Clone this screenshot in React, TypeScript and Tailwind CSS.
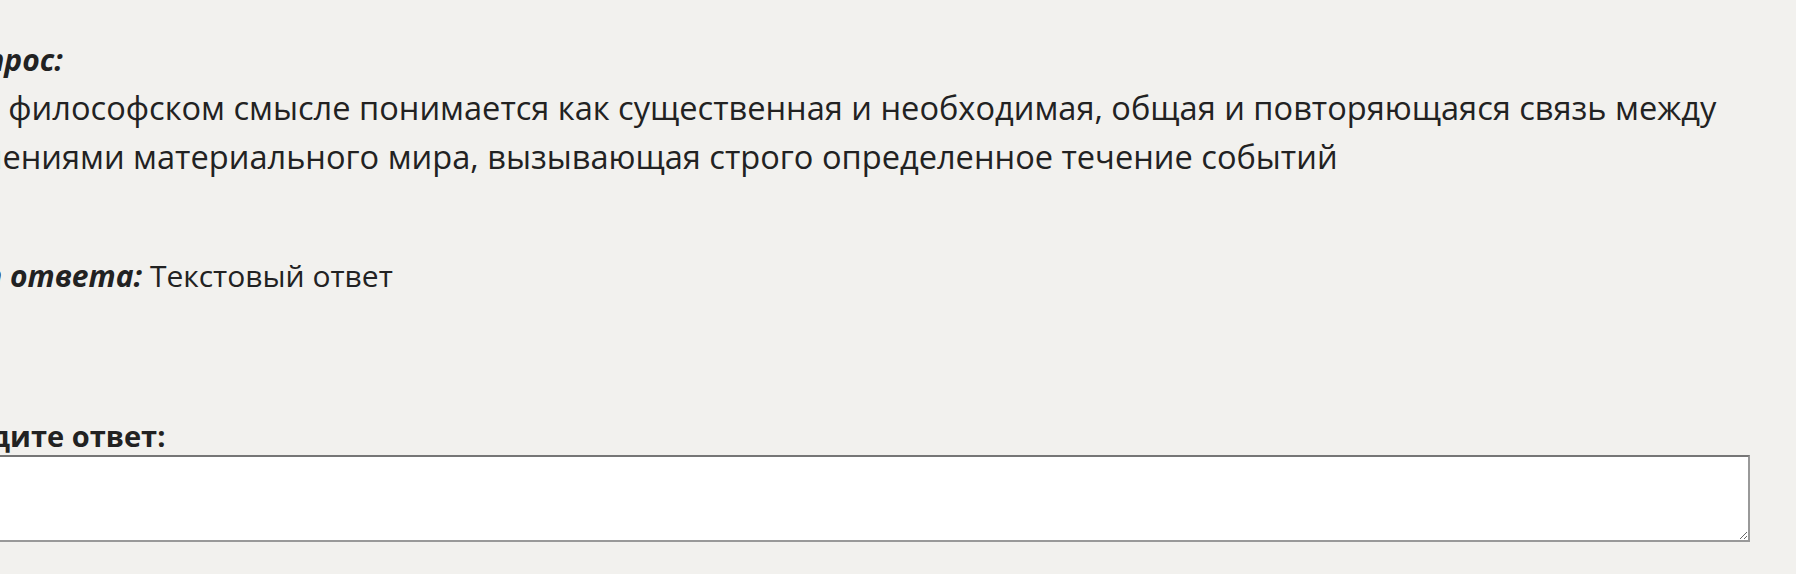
import React from "react";

export default function App() {
  return (
    <div className="min-h-screen w-full overflow-hidden bg-[#f2f1ee] text-[#222222]" style={{ fontFamily: '"Open Sans", "Noto Sans", sans-serif' }}>
      <div className="-ml-[50px] w-[1800px] pt-[35px] text-[30px]">
        <p className="font-bold italic leading-[49px]">Вопрос:</p>
        <p className="-ml-[3px] mt-[-1px] text-[32.6px] leading-[49px]">
          ... в философском смысле понимается как существенная и необходимая, общая и повторяющаяся связь между явлениями материального мира, вызывающая строго определенное течение событий
        </p>
        <p className="mt-[70px] leading-[49px]">
          <span className="font-bold italic">Тип ответа:</span> Текстовый ответ
        </p>
        <label className="-ml-[14px] mt-[121px] block text-[29px] font-bold leading-[30px]">Введите ответ:</label>
        <textarea className="mt-[4px] block h-[87px] w-full resize-y border-2 border-t-[#767676] border-l-[#767676] border-b-[#999999] border-r-[#999999] bg-white" />
      </div>
    </div>
  );
}
